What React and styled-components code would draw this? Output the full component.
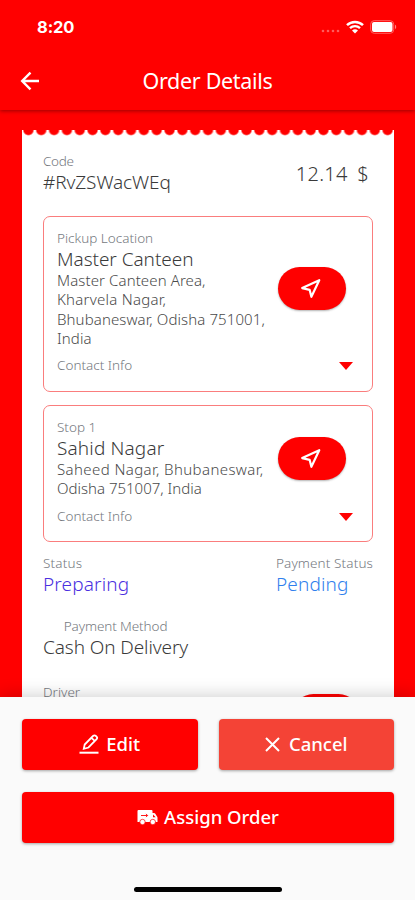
import React from "react";
import styled, { createGlobalStyle } from "styled-components";

const GlobalStyle = createGlobalStyle`
  * { box-sizing: border-box; }
  body {
    margin: 0;
    background: #ff0000;
    font-family: "Noto Sans", "Open Sans", sans-serif;
  }
`;

const Screen = styled.div`
  width: 415px;
  height: 900px;
  display: flex;
  flex-direction: column;
  overflow: hidden;
  background: #ff0000;
`;

const Header = styled.header`
  flex: none;
  height: 110px;
  color: #fff;
  z-index: 1;
  box-shadow: 0 1px 4px rgba(0, 0, 0, 0.4);
`;

const StatusBar = styled.div`
  display: flex;
  justify-content: space-between;
  align-items: center;
  height: 54px;
  padding: 0 18px 0 37px;
`;

const Time = styled.span`
  font: 700 16.5px/24px Inter, sans-serif;
  letter-spacing: -0.1px;
`;

const StatusIcons = styled.div`
  display: flex;
  align-items: center;
  gap: 6px;
`;

const TitleBar = styled.div`
  display: grid;
  grid-template-columns: 40px 1fr 40px;
  align-items: center;
  height: 54px;
  padding: 0 20px;
`;

const Title = styled.h1`
  margin: 0;
  text-align: center;
  font-size: 21.5px;
  font-weight: 400;
  line-height: 26px;
  letter-spacing: -0.3px;
`;

const Content = styled.main`
  flex: 1;
  min-height: 0;
  overflow: hidden;
  padding: 20px 21px 0 22px;
`;

const Teeth = styled.div`
  height: 6px;
  background: radial-gradient(
      ellipse 6px 6px at 50% 0,
      transparent 72%,
      #fff 98%
    )
    0 0 / 12.83px 6px repeat-x;
`;

const Ticket = styled.section`
  height: 620px;
  padding: 16px 21px 0;
  background: #fff;
`;

const Row = styled.div`
  display: flex;
  justify-content: space-between;
  align-items: flex-start;
  margin-top: ${(props) => props.$top || 0}px;
`;

const DriverRow = styled(Row)`
  padding-right: 13px;

  button {
    margin-top: 11px;
  }
`;

const Field = styled.div`
  display: flex;
  flex-direction: column;
  align-items: ${(props) => props.$align || "flex-start"};
  padding-bottom: 1px;
`;

const Label = styled.span`
  font-size: 13.5px;
  font-weight: 300;
  line-height: 18px;
  color: #757980;
  white-space: nowrap;
  letter-spacing: ${(props) => props.$spacing || 0}px;
`;

const Value = styled.span`
  font-size: 19px;
  font-weight: 300;
  line-height: 24px;
  color: ${(props) => props.$color || "#3a3a3a"};
  white-space: nowrap;
  letter-spacing: ${(props) => props.$spacing || 0}px;
`;

const Price = styled(Value)`
  margin: 10px 4px 0 0;
  font-size: 20px;
  word-spacing: 4px;
`;

const StopCard = styled.article`
  height: ${(props) => props.$height}px;
  margin-top: ${(props) => props.$top}px;
  padding: 12px 26px 0 13px;
  border: 1px solid #fa7d7d;
  border-radius: 7px;
`;

const StopBody = styled.div`
  display: flex;
  justify-content: space-between;
  align-items: center;

  button {
    margin-bottom: 1px;
  }
`;

const AddressLine = styled.span`
  font-size: 15px;
  font-weight: 300;
  line-height: 19.25px;
  color: #4a4a4a;
  white-space: nowrap;
  letter-spacing: ${(props) => props.$spacing || 0}px;
`;

const ContactRow = styled.div`
  display: flex;
  justify-content: space-between;
  align-items: center;
  margin-top: 7px;
  padding-right: 1px;
`;

const Caret = styled.i`
  width: 0;
  height: 0;
  margin: 2px -8px 0 0;
  border: 7.5px solid transparent;
  border-top: 8px solid #ff0000;
  border-bottom: 0;
`;

const Pill = styled.button`
  flex: none;
  display: flex;
  align-items: center;
  justify-content: center;
  width: 68px;
  height: 43px;
  margin: 0;
  padding: 0 4px 0 0;
  border: 0;
  border-radius: 22px;
  background: #ff0000;
  box-shadow: 0 1px 2px rgba(0, 0, 0, 0.3);
`;

const Footer = styled.footer`
  flex: none;
  position: relative;
  display: flex;
  flex-direction: column;
  align-items: center;
  height: 203px;
  padding: 22px 21px 8px 22px;
  background: #fafafa;
  box-shadow: 0 -2px 16px rgba(0, 0, 0, 0.18);
`;

const Actions = styled.div`
  display: grid;
  grid-template-columns: 1fr 1fr;
  gap: 22px 21px;
  width: 100%;
`;

const ActionButton = styled.button`
  grid-column: ${(props) => (props.$wide ? "1 / -1" : "auto")};
  display: flex;
  align-items: center;
  justify-content: center;
  gap: ${(props) => props.$gap}px;
  height: 51px;
  padding: 0 0 1px;
  border: 0;
  border-radius: 4px;
  color: #fff;
  background: ${(props) => props.$bg || "#ff0000"};
  box-shadow: 0 1px 3px rgba(0, 0, 0, 0.35);
  font: 500 18.5px/24px "Noto Sans", sans-serif;
`;

const HomeIndicator = styled.div`
  width: 148px;
  height: 5px;
  margin-top: auto;
  border-radius: 3px;
  background: #000;
`;

function BackIcon() {
  return (
    <svg width="20" height="20" viewBox="0 0 20 20" fill="none" stroke="#fff" strokeWidth="2.4">
      <path d="M19 10H2.5M10.5 1.7 2.2 10l8.3 8.3" />
    </svg>
  );
}

function SignalIcon() {
  return (
    <svg width="19" height="14" viewBox="0 0 19 14" fill="#ff5c5c">
      {[2, 7, 12, 17].map((x) => (
        <circle key={x} cx={x} cy="11" r="1.3" />
      ))}
    </svg>
  );
}

function WifiIcon() {
  return (
    <svg width="18" height="14" viewBox="0 0 18 14" fill="none" stroke="#fff">
      <path d="M1 5.2a11.5 11.5 0 0 1 16 0" strokeWidth="2.5" />
      <path d="M4 8.2a7.2 7.2 0 0 1 10 0" strokeWidth="2.3" />
      <path d="M9 13.6 6 10.6a4.3 4.3 0 0 1 6 0Z" fill="#fff" stroke="none" />
    </svg>
  );
}

function BatteryIcon() {
  return (
    <svg width="27" height="14" viewBox="0 0 27 14">
      <rect x="0.7" y="0.7" width="23" height="12.6" rx="3.5" fill="none" stroke="#ff6060" />
      <rect x="2" y="2" width="20.5" height="10" rx="2" fill="#fff" />
      <path d="M25 4.8v4.4c1.6-.6 1.6-3.8 0-4.4Z" fill="#ff8080" />
    </svg>
  );
}

function NavigationIcon() {
  return (
    <svg
      width="21"
      height="21"
      viewBox="0 0 24 24"
      fill="none"
      stroke="#fff"
      strokeWidth="2.5"
      strokeLinejoin="round"
    >
      <path d="M2.5 11.5 22 2.5l-9 19-2-8Z" />
    </svg>
  );
}

function EditIcon() {
  return (
    <svg width="20" height="20" viewBox="0 0 20 20" fill="none" stroke="#fff" strokeWidth="1.8">
      <path d="M.5 18.7h19" strokeWidth="2" />
      <path d="m4.800 14.800.9-4.300L14 2q1.500-1.200 3.200.2t.4 3L9.500 13.500ZM12.500 3.800l3.200 3" />
    </svg>
  );
}

function CloseIcon() {
  return (
    <svg width="15" height="15" viewBox="0 0 15 15" fill="none" stroke="#fff" strokeWidth="2">
      <path d="m1 1 13 13M14 1 1 14" />
    </svg>
  );
}

function TruckIcon() {
  return (
    <svg width="21" height="17" viewBox="0 0 21 17">
      <path
        d="M1.500 1h13q1 0 1 1v2h1.500q.8 0 1.300.7L20 7.500q.5.6.5 1.300V13H.5V2q0-1 1-1Z"
        fill="#fff"
      />
      <circle cx="5.500" cy="13" r="2.700" fill="#fff" stroke="#ff0000" strokeWidth="0.7" />
      <circle cx="15.800" cy="13" r="2.700" fill="#fff" stroke="#ff0000" strokeWidth="0.7" />
      <path d="M4 6.500h6.500M9 4.900l1.600 1.600L9 8.100" fill="none" stroke="#ff0000" strokeWidth="0.9" />
      <path d="M16 5.500v2.700h2.700Z" fill="#ff0000" />
    </svg>
  );
}

function NavigateButton() {
  return (
    <Pill aria-label="Navigate">
      <NavigationIcon />
    </Pill>
  );
}

function Stop({ label, name, nameSpacing, lines, height, top }) {
  return (
    <StopCard $height={height} $top={top}>
      <StopBody>
        <Field>
          <Label>{label}</Label>
          <Value $spacing={nameSpacing}>{name}</Value>
          {lines.map((line) => (
            <AddressLine key={line.text} $spacing={line.spacing}>
              {line.text}
            </AddressLine>
          ))}
        </Field>
        <NavigateButton />
      </StopBody>
      <ContactRow>
        <Label>Contact Info</Label>
        <Caret />
      </ContactRow>
    </StopCard>
  );
}

const pickupLines = [
  { text: "Master Canteen Area,", spacing: 0.1 },
  { text: "Kharvela Nagar,", spacing: 0.25 },
  { text: "Bhubaneswar, Odisha 751001,", spacing: 0.1 },
  { text: "India", spacing: 0.1 },
];

const stopLines = [
  { text: "Saheed Nagar, Bhubaneswar,", spacing: 0.4 },
  { text: "Odisha 751007, India", spacing: 0 },
];

export default function App() {
  return (
    <Screen>
      <GlobalStyle />
      <Header>
        <StatusBar>
          <Time>8:20</Time>
          <StatusIcons>
            <SignalIcon />
            <WifiIcon />
            <BatteryIcon />
          </StatusIcons>
        </StatusBar>
        <TitleBar>
          <BackIcon />
          <Title>Order Details</Title>
        </TitleBar>
      </Header>

      <Content>
        <Teeth />
        <Ticket>
          <Row>
            <Field>
              <Label $spacing={-0.3}>Code</Label>
              <Value $spacing={-0.1}>#RvZSWacWEq</Value>
            </Field>
            <Price $spacing={0.3}>12.14 $</Price>
          </Row>
          <Stop
            label="Pickup Location"
            name="Master Canteen"
            nameSpacing={-0.05}
            lines={pickupLines}
            height={176}
            top={21}
          />
          <Stop
            label="Stop 1"
            name="Sahid Nagar"
            nameSpacing={0.15}
            lines={stopLines}
            height={137}
            top={13}
          />
          <Row $top={12}>
            <Field>
              <Label $spacing={0.2}>Status</Label>
              <Value $color="#4a2fe0" $spacing={0.15}>Preparing</Value>
            </Field>
            <Field>
              <Label $spacing={0.12}>Payment Status</Label>
              <Value $color="#2f80ed" $spacing={0.15}>Pending</Value>
            </Field>
          </Row>
          <Row $top={20}>
            <Field $align="center">
              <Label $spacing={-0.1}>Payment Method</Label>
              <Value $spacing={-0.1}>Cash On Delivery</Value>
            </Field>
          </Row>
          <DriverRow $top={23}>
            <Label>Driver</Label>
            <NavigateButton />
          </DriverRow>
        </Ticket>
      </Content>

      <Footer>
        <Actions>
          <ActionButton $gap={7}>
            <EditIcon />
            Edit
          </ActionButton>
          <ActionButton $gap={9} $bg="#f44336">
            <CloseIcon />
            Cancel
          </ActionButton>
          <ActionButton $wide $gap={6}>
            <TruckIcon />
            Assign Order
          </ActionButton>
        </Actions>
        <HomeIndicator />
      </Footer>
    </Screen>
  );
}
